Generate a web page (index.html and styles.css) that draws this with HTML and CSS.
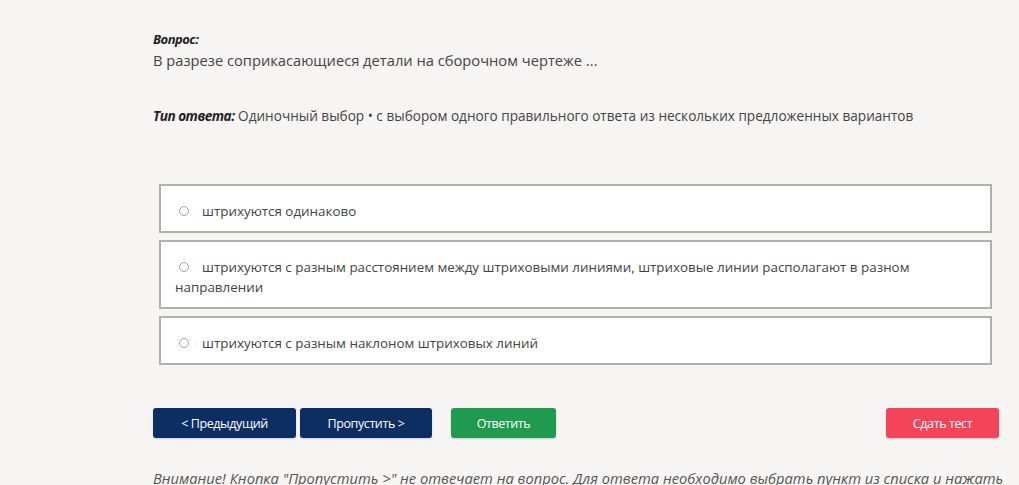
FILE: index.html
```html
<!DOCTYPE html>
<html lang="ru">
<head>
<meta charset="utf-8">
<link rel="stylesheet" href="styles.css">
</head>
<body>
<div class="page">
  <div class="question">
    <div class="q-label">Вопрос:</div>
    <div class="q-text">В разрезе соприкасающиеся детали на сборочном чертеже ...</div>
  </div>
  <div class="type"><span class="type-label">Тип ответа:</span> Одиночный выбор • с выбором одного правильного ответа из нескольких предложенных вариантов</div>
  <div class="options">
    <label class="option"><span class="radio"></span>штрихуются одинаково</label>
    <label class="option"><span class="radio"></span>штрихуются с разным расстоянием между штриховыми линиями, штриховые линии располагают в разном направлении</label>
    <label class="option"><span class="radio"></span>штрихуются с разным наклоном штриховых линий</label>
  </div>
  <div class="actions">
    <button class="btn btn-nav btn-prev">&lt; Предыдущий</button>
    <button class="btn btn-nav btn-skip">Пропустить &gt;</button>
    <button class="btn btn-answer">Ответить</button>
    <button class="btn btn-submit">Сдать тест</button>
  </div>
  <div class="note">Внимание! Кнопка "Пропустить &gt;" не отвечает на вопрос. Для ответа необходимо выбрать пункт из списка и нажать</div>
</div>
</body>
</html>
```
FILE: styles.css
```css
html, body {
  margin: 0;
  padding: 0;
  background: #f6f5f3;
  font-family: "Open Sans", "Noto Sans", sans-serif;
  color: #333;
  overflow: hidden;
}
.page {
  width: 846px;
  margin-left: 153px;
  padding-top: 30px;
}
.q-label {
  font-size: 13px;
  font-weight: 700;
  font-style: italic;
  color: #222;
  letter-spacing: -0.5px;
  line-height: 18px;
}
.q-text {
  font-size: 14.7px;
  line-height: 24px;
  color: #444;
}
.type {
  margin-top: 34px;
  font-size: 13.6px;
  line-height: 20px;
  color: #444;
}
.type-label {
  font-weight: 700;
  font-style: italic;
  color: #222;
  letter-spacing: -0.5px;
}
.options {
  margin: 58px 7px 0 6px;
  display: flex;
  flex-direction: column;
  gap: 7px;
}
.option {
  display: block;
  background: #fff;
  border: 2px solid #b0b0b0;
  padding: 15px 14px 10px 14px;
  font-size: 13.4px;
  line-height: 20px;
  color: #444;
}
.radio {
  display: inline-block;
  width: 8px;
  height: 8px;
  border: 1px solid #a0a0a0;
  border-radius: 50%;
  margin: 0 13px 0 4px;
  vertical-align: 0px;
}
.actions {
  display: flex;
  align-items: center;
  margin-top: 43px;
}
.btn {
  height: 30px;
  border: none;
  border-radius: 3px;
  color: #fff;
  font-family: "Open Sans", sans-serif;
  font-size: 12.5px;
  letter-spacing: -0.4px;
  padding: 0;
  box-shadow: 0 1px 2px rgba(0,0,0,0.15);
}
.btn-nav {
  background: #0d2e63;
}
.btn-prev { width: 143px; }
.btn-skip { width: 132px; margin-left: 4px; }
.btn-answer {
  width: 105px;
  margin-left: 19px;
  background: #1f9a4e;
}
.btn-submit {
  width: 113px;
  margin-left: auto;
  background: #f34459;
}
.note {
  margin-top: 30px;
  font-size: 14.7px;
  font-style: italic;
  color: #555;
  line-height: 20px;
  white-space: nowrap;
}
```
